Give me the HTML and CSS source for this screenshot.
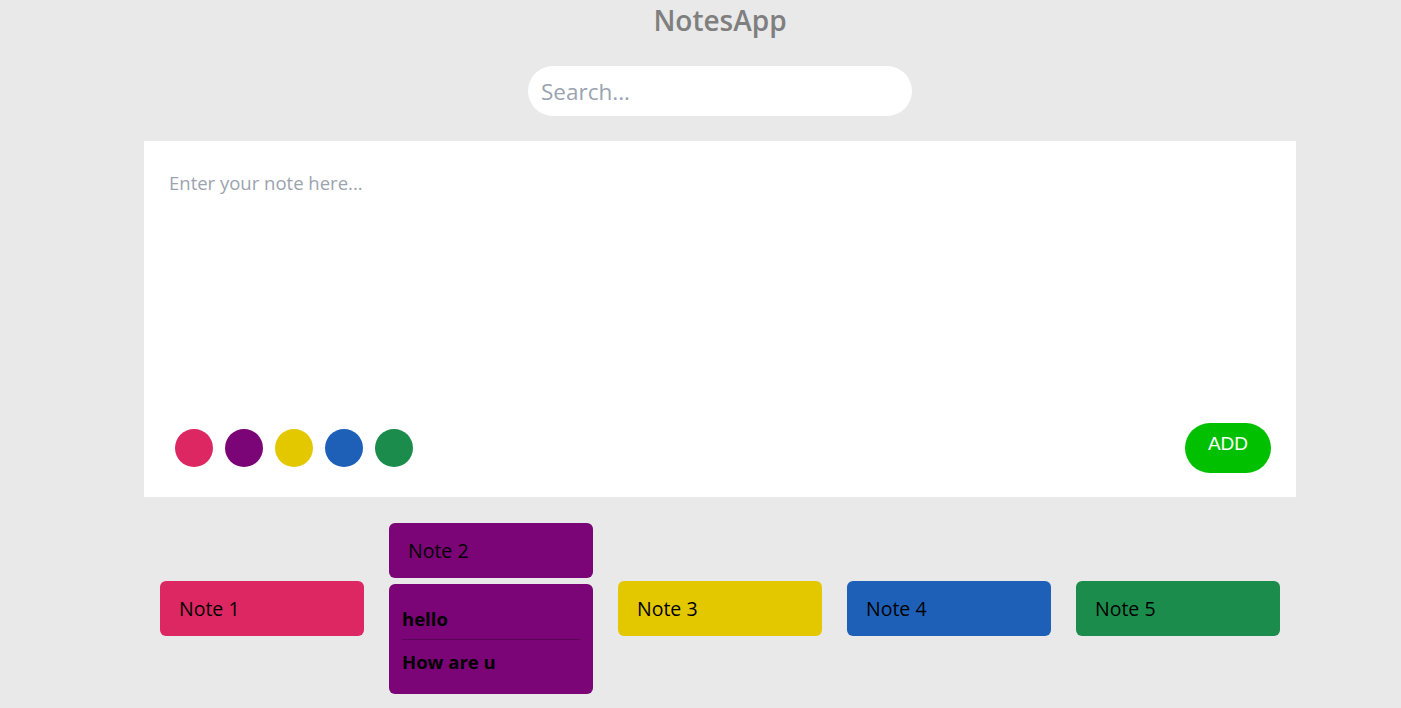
FILE: index.html
```html
<!DOCTYPE html>
<html>
<head>
<meta charset="utf-8">
<link rel="stylesheet" href="styles.css">
</head>
<body>
<h1 class="title">NotesApp</h1>
<div class="search-wrap">
  <input class="search" type="text" placeholder="Search...">
</div>
<section class="editor">
  <textarea class="note-input" placeholder="Enter your note here..."></textarea>
  <div class="editor-bar">
    <div class="colors">
      <span class="dot c-pink"></span>
      <span class="dot c-purple"></span>
      <span class="dot c-yellow"></span>
      <span class="dot c-blue"></span>
      <span class="dot c-green"></span>
    </div>
    <button class="add-btn">ADD</button>
  </div>
</section>
<section class="notes">
  <div class="note-col"><div class="note c-pink">Note 1</div></div>
  <div class="note-col">
    <div class="note c-purple">Note 2</div>
    <div class="note-body c-purple">
      <p class="line">hello</p>
      <p class="line">How are u</p>
    </div>
  </div>
  <div class="note-col"><div class="note c-yellow">Note 3</div></div>
  <div class="note-col"><div class="note c-blue">Note 4</div></div>
  <div class="note-col"><div class="note c-green">Note 5</div></div>
</section>
</body>
</html>
```
FILE: styles.css
```css
* { box-sizing: border-box; }
body {
  margin: 0;
  padding-left: 39px;
  background: #e9e9e9;
  font-family: "Open Sans", "Noto Sans", sans-serif;
}
.title {
  margin: 0;
  padding-top: 2px;
  height: 66px;
  text-align: center;
  font-size: 28px;
  font-weight: 600;
  color: #7f7f7f;
  line-height: 36px;
}
.search-wrap {
  display: flex;
  justify-content: center;
}
.search {
  width: 384px;
  height: 50px;
  border: none;
  border-radius: 25px;
  background: #fff;
  padding: 0 13px;
  font-family: inherit;
  font-size: 22.5px;
  outline: none;
}
.search::placeholder { color: #9aa3b0; }
.editor {
  margin: 25px auto 0;
  width: 1152px;
  height: 356px;
  background: #fff;
  display: flex;
  flex-direction: column;
  padding: 25px 25px 24px 31px;
}
.note-input {
  flex: 1;
  border: none;
  resize: none;
  outline: none;
  padding: 0;
  margin-left: -6px;
  font-family: inherit;
  font-size: 18.5px;
  line-height: 34px;
  margin-top: 0;
}
.note-input::placeholder { color: #9ca3af; }
.editor-bar {
  display: flex;
  justify-content: space-between;
  align-items: center;
}
.colors { display: flex; gap: 12px; }
.dot {
  width: 38px;
  height: 38px;
  border-radius: 50%;
  display: block;
}
.c-pink { background: #dc2762; }
.c-purple { background: #7b0477; }
.c-yellow { background: #e3c800; }
.c-blue { background: #1e60b8; }
.c-green { background: #1b8c4c; }
.add-btn {
  width: 86px;
  height: 50px;
  border: none;
  border-radius: 25px;
  background: #00c000;
  color: #fff;
  font-family: "Liberation Sans", Arial, sans-serif;
  font-size: 19px;
  padding-bottom: 9px;
}
.notes {
  width: 1152px;
  margin: 26px auto 0;
  padding: 0 16px;
  display: flex;
  gap: 25px;
  align-items: center;
}
.note-col {
  width: 204px;
  display: flex;
  flex-direction: column;
  gap: 6px;
}
.note {
  height: 55px;
  border-radius: 6px;
  padding: 0 20px 0 19px;
  display: flex;
  align-items: center;
  font-size: 19.5px;
  color: #000;
}
.note-body {
  border-radius: 6px;
  padding: 19px 13px 20px;
  height: 110px;
}
.line {
  margin: 0;
  font-size: 18.5px;
  font-weight: 700;
  color: #000;
  line-height: 32px;
}
.line + .line {
  border-top: 1px solid #5a0557;
  margin-top: 4px;
  padding-top: 6px;
}
```
